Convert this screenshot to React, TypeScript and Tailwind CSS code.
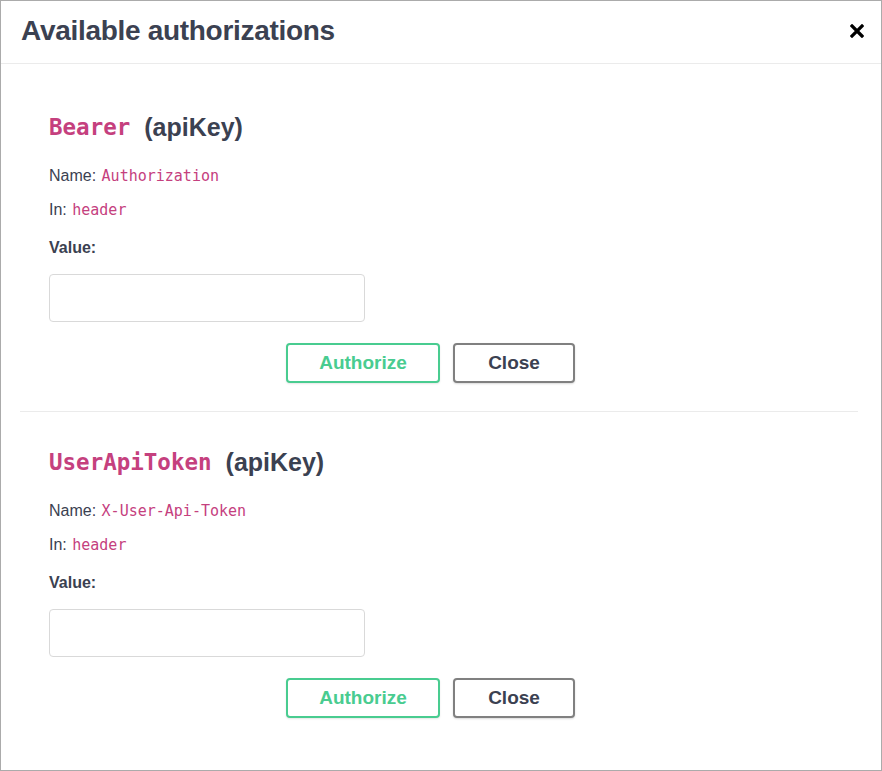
import type { ReactNode } from "react";

const SANS = "font-['Liberation_Sans',Arial,sans-serif]";
const MONO = "font-['DejaVu_Sans_Mono',monospace]";

interface AuthSchemeProps {
  scheme: string;
  name: string;
  location: string;
  first?: boolean;
}

function CodeText({ children }: { children: ReactNode }) {
  return (
    <span className={`${MONO} ml-[1px] text-[15px] text-[#c5407e]`}>
      {children}
    </span>
  );
}

function AuthScheme({ scheme, name, location, first }: AuthSchemeProps) {
  return (
    <div
      className={`ml-[19px] mr-[23px] flex flex-col pb-[28px] pt-[35px] ${
        first ? "border-b border-[#ebebeb]" : ""
      }`}
    >
      <div className="flex flex-col pl-[29px]">
        <h4 className="flex items-center leading-[30px]">
          <span className={`${MONO} text-[22.5px] font-bold text-[#c5407e]`}>
            {scheme}
          </span>
          <span className="ml-[14px] text-[25px] font-bold text-[#3b4151]">
            (apiKey)
          </span>
        </h4>
        <div className="mt-[24px] text-[16px] leading-[20px] text-[#3b4151]">
          Name: <CodeText>{name}</CodeText>
        </div>
        <div className="mt-[14px] text-[16px] leading-[20px] text-[#3b4151]">
          In: <CodeText>{location}</CodeText>
        </div>
        <label className="mt-[18px] text-[16px] font-bold leading-[20px] text-[#3b4151]">
          Value:
        </label>
        <input
          type="text"
          className="mt-[16px] h-[48px] w-[316px] rounded-[4px] border border-[#d9d9d9] bg-white px-[10px] outline-none"
        />
      </div>
      <div className="mt-[21px] flex justify-center gap-[13px] pr-[17px]">
        <button className="h-[40px] w-[154px] rounded-[4px] border-2 border-[#49cc90] bg-white text-[19px] font-bold text-[#49cc90] shadow-[0_1px_2px_rgba(0,0,0,0.1)]">
          Authorize
        </button>
        <button className="h-[40px] w-[122px] rounded-[4px] border-2 border-[#808080] bg-white text-[19px] font-bold text-[#3b4151] shadow-[0_1px_2px_rgba(0,0,0,0.15)]">
          Close
        </button>
      </div>
    </div>
  );
}

export default function App() {
  return (
    <div
      className={`${SANS} box-border flex h-[771px] w-[882px] flex-col border border-[#ababab] bg-white`}
    >
      <div className="flex h-[63px] shrink-0 items-center justify-between border-b border-[#ebebeb] pb-[2px] pl-[20px] pr-[17px]">
        <h3 className="text-[28px] font-bold tracking-[-0.3px] text-[#3b4151]">
          Available authorizations
        </h3>
        <button className="flex size-[14px] items-center justify-center">
          <svg width="14" height="14" viewBox="0 0 14 14">
            <path
              d="M2 2 L12 12 M12 2 L2 12"
              stroke="#000"
              strokeWidth="3.2"
              strokeLinecap="square"
            />
          </svg>
        </button>
      </div>
      <div className="flex flex-col pt-[13px]">
        <AuthScheme
          first
          scheme="Bearer"
          name="Authorization"
          location="header"
        />
        <AuthScheme
          scheme="UserApiToken"
          name="X-User-Api-Token"
          location="header"
        />
      </div>
    </div>
  );
}
